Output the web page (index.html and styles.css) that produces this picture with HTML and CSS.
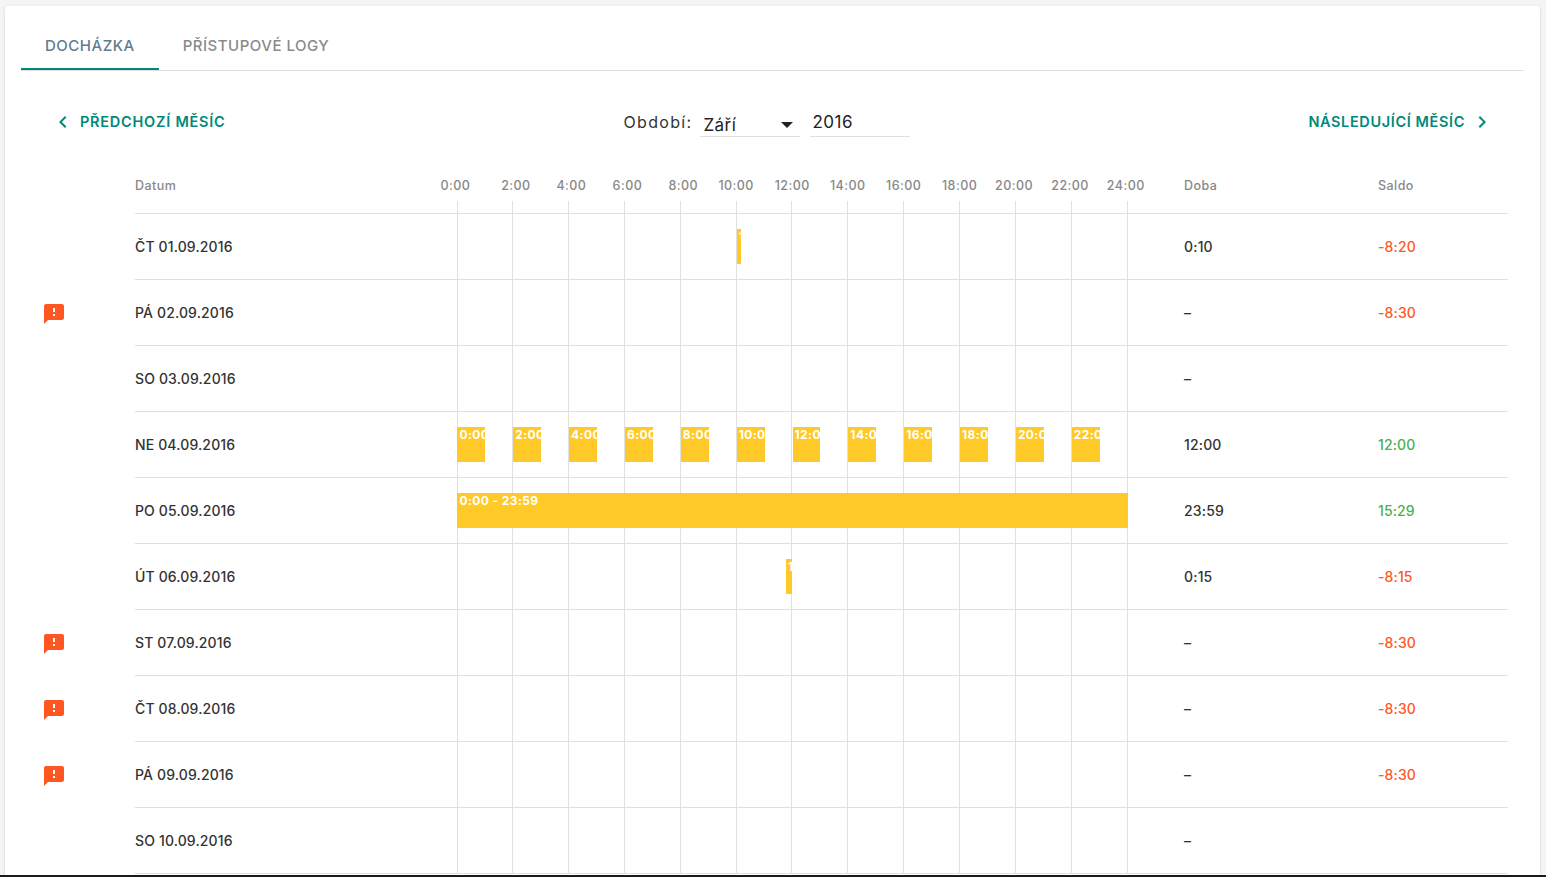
FILE: index.html
```html
<!DOCTYPE html>
<html lang="cs">
<head>
<meta charset="utf-8">
<title>Docházka</title>
<link rel="stylesheet" href="styles.css">
</head>
<body>
<main class="card">
  <nav class="tabs">
    <a class="tab tab-active">DOCHÁZKA</a>
    <a class="tab">PŘÍSTUPOVÉ LOGY</a>
  </nav>
  <div class="pager">
    <a class="pager-link">
      <svg class="icon" viewBox="0 0 24 24"><path d="M15.41 7.41L14 6l-6 6 6 6 1.41-1.41L10.83 12z"/></svg>
      <span>PŘEDCHOZÍ MĚSÍC</span>
    </a>
    <div class="period">
      <span class="period-label">Období:</span>
      <div class="field field-select"><span class="month">Září</span><i class="caret"></i></div>
      <div class="field"><span class="year">2016</span></div>
    </div>
    <a class="pager-link pager-next">
      <span>NÁSLEDUJÍCÍ MĚSÍC</span>
      <svg class="icon" viewBox="0 0 24 24"><path d="M10 6L8.59 7.41 13.17 12l-4.58 4.59L10 18l6-6z"/></svg>
    </a>
  </div>
  <section class="sheet">
    <div class="gridlines"><i></i><i></i><i></i><i></i><i></i><i></i><i></i><i></i><i></i><i></i><i></i><i></i><i></i></div>

    <div class="row row-head">
      <div class="flag"></div>
      <div class="cols">
        <div>Datum</div>
        <div class="axis"><span>0:00</span><span>2:00</span><span>4:00</span><span>6:00</span><span>8:00</span><span>10:00</span><span>12:00</span><span>14:00</span><span>16:00</span><span>18:00</span><span>20:00</span><span>22:00</span><span>24:00</span></div>
        <div class="doba">Doba</div>
        <div>Saldo</div>
      </div>
    </div>

    <div class="row">
      <div class="flag"></div>
      <div class="cols">
        <div>ČT 01.09.2016</div>
        <div class="track"><div class="bar" style="left:41.667%;width:0.694%">10:00 - 10:10</div></div>
        <div class="doba">0:10</div>
        <div class="neg">-8:20</div>
      </div>
    </div>

    <div class="row">
      <div class="flag"><svg class="alert" viewBox="0 0 24 24"><path d="M20 2H4c-1.1 0-1.99.9-1.99 2L2 22l4-4h14c1.1 0 2-.9 2-2V4c0-1.1-.9-2-2-2zm-7 12h-2v-2h2v2zm0-4h-2V6h2v4z"/></svg></div>
      <div class="cols">
        <div>PÁ 02.09.2016</div>
        <div class="track"></div>
        <div class="doba">–</div>
        <div class="neg">-8:30</div>
      </div>
    </div>

    <div class="row">
      <div class="flag"></div>
      <div class="cols">
        <div>SO 03.09.2016</div>
        <div class="track"></div>
        <div class="doba">–</div>
        <div></div>
      </div>
    </div>

    <div class="row">
      <div class="flag"></div>
      <div class="cols">
        <div>NE 04.09.2016</div>
        <div class="track">
          <div class="bar" style="left:0%;width:4.167%">0:00 - 1:00</div>
          <div class="bar" style="left:8.333%;width:4.167%">2:00 - 3:00</div>
          <div class="bar" style="left:16.667%;width:4.167%">4:00 - 5:00</div>
          <div class="bar" style="left:25%;width:4.167%">6:00 - 7:00</div>
          <div class="bar" style="left:33.333%;width:4.167%">8:00 - 9:00</div>
          <div class="bar" style="left:41.667%;width:4.167%">10:00 - 11:00</div>
          <div class="bar" style="left:50%;width:4.167%">12:00 - 13:00</div>
          <div class="bar" style="left:58.333%;width:4.167%">14:00 - 15:00</div>
          <div class="bar" style="left:66.667%;width:4.167%">16:00 - 17:00</div>
          <div class="bar" style="left:75%;width:4.167%">18:00 - 19:00</div>
          <div class="bar" style="left:83.333%;width:4.167%">20:00 - 21:00</div>
          <div class="bar" style="left:91.667%;width:4.167%">22:00 - 23:00</div>
        </div>
        <div class="doba">12:00</div>
        <div class="pos">12:00</div>
      </div>
    </div>

    <div class="row">
      <div class="flag"></div>
      <div class="cols">
        <div>PO 05.09.2016</div>
        <div class="track"><div class="bar" style="left:0%;width:100%">0:00 - 23:59</div></div>
        <div class="doba">23:59</div>
        <div class="pos">15:29</div>
      </div>
    </div>

    <div class="row">
      <div class="flag"></div>
      <div class="cols">
        <div>ÚT 06.09.2016</div>
        <div class="track"><div class="bar" style="left:49.03%;width:0.97%">11:46 - 12:00</div></div>
        <div class="doba">0:15</div>
        <div class="neg">-8:15</div>
      </div>
    </div>

    <div class="row">
      <div class="flag"><svg class="alert" viewBox="0 0 24 24"><path d="M20 2H4c-1.1 0-1.99.9-1.99 2L2 22l4-4h14c1.1 0 2-.9 2-2V4c0-1.1-.9-2-2-2zm-7 12h-2v-2h2v2zm0-4h-2V6h2v4z"/></svg></div>
      <div class="cols">
        <div>ST 07.09.2016</div>
        <div class="track"></div>
        <div class="doba">–</div>
        <div class="neg">-8:30</div>
      </div>
    </div>

    <div class="row">
      <div class="flag"><svg class="alert" viewBox="0 0 24 24"><path d="M20 2H4c-1.1 0-1.99.9-1.99 2L2 22l4-4h14c1.1 0 2-.9 2-2V4c0-1.1-.9-2-2-2zm-7 12h-2v-2h2v2zm0-4h-2V6h2v4z"/></svg></div>
      <div class="cols">
        <div>ČT 08.09.2016</div>
        <div class="track"></div>
        <div class="doba">–</div>
        <div class="neg">-8:30</div>
      </div>
    </div>

    <div class="row">
      <div class="flag"><svg class="alert" viewBox="0 0 24 24"><path d="M20 2H4c-1.1 0-1.99.9-1.99 2L2 22l4-4h14c1.1 0 2-.9 2-2V4c0-1.1-.9-2-2-2zm-7 12h-2v-2h2v2zm0-4h-2V6h2v4z"/></svg></div>
      <div class="cols">
        <div>PÁ 09.09.2016</div>
        <div class="track"></div>
        <div class="doba">–</div>
        <div class="neg">-8:30</div>
      </div>
    </div>

    <div class="row">
      <div class="flag"></div>
      <div class="cols">
        <div>SO 10.09.2016</div>
        <div class="track"></div>
        <div class="doba">–</div>
        <div></div>
      </div>
    </div>
  </section>
</main>
<div class="edge"></div>
</body>
</html>
```
FILE: styles.css
```css
* { box-sizing: border-box; }
html, body { margin: 0; height: 100%; }
body {
  display: flex;
  flex-direction: column;
  height: 877px;
  overflow: hidden;
  background: #f5f5f5;
  font-family: "Inter", "Liberation Sans", sans-serif;
  color: #333;
}
.card {
  flex: 1;
  min-height: 0;
  margin: 6px 6px 0 5px;
  padding: 16px 0 0;
  overflow: hidden;
  background: #fff;
  border-radius: 3px 3px 0 0;
  box-shadow: 0 1px 3px rgba(0,0,0,.16);
}
.edge { flex: none; height: 2px; background: #1a1a1a; }

/* tabs */
.tabs {
  display: flex;
  height: 49px;
  margin: 0 16px;
  border-bottom: 1px solid #e0e0e0;
}
.tab {
  display: flex;
  align-items: center;
  padding: 0 24px 1px;
  font-size: 15px;
  font-weight: 500;
  letter-spacing: .5px;
  color: #8a8a8a;
}
.tab-active { color: #5f7d8e; border-bottom: 2px solid #00897b; padding-bottom: 0; }

/* month pager */
.pager {
  display: flex;
  justify-content: space-between;
  align-items: center;
  height: 36px;
  margin-top: 33px;
  padding: 0 46px;
}
.pager-link {
  display: flex;
  align-items: center;
  gap: 5px;
  font-size: 14.5px;
  font-weight: 600;
  letter-spacing: .76px;
  color: #00897b;
}
.pager-next { letter-spacing: .62px; }
.pager-link span { margin-top: -1px; }
.icon { width: 24px; height: 24px; fill: #00897b; flex: none; }
.period { display: flex; align-items: center; gap: 10px; }
.period-label { font-size: 16px; letter-spacing: 1.3px; margin-right: -2px; margin-top: -1px; }
.field {
  display: flex;
  align-items: center;
  justify-content: space-between;
  width: 100px;
  height: 30px;
  padding: 0 1px 0 2px;
  border-bottom: 1px solid #e0e0e0;
  font-size: 17px;
  letter-spacing: .5px;
  color: #222;
}
.field-select { padding-left: 3px; padding-right: 7px; }
.month { margin-top: 6px; }
.caret {
  width: 0;
  height: 0;
  border-left: 6px solid transparent;
  border-right: 6px solid transparent;
  border-top: 6px solid #222;
  margin-top: 6px;
}

/* sheet */
.sheet { position: relative; margin-top: 25px; padding-right: 32px; }
.gridlines {
  position: absolute;
  top: 36px;
  bottom: 0;
  left: 451.5px;
  display: flex;
}
.gridlines i { flex: none; width: 55.8333px; border-left: 1px solid #e0e0e0; }
.gridlines i:last-child { margin-left: .5px; }

.row { display: flex; position: relative; }
.flag { flex: none; width: 130px; padding: 2px 0 0 37px; display: flex; align-items: center; }
.alert { width: 24px; height: 24px; fill: #ff5722; }
.cols {
  flex: 1;
  display: grid;
  grid-template-columns: 322.42px 670.2px 250.38px 1fr;
  align-items: center;
  height: 66px;
  border-bottom: 1px solid #e0e0e0;
  font-size: 14px;
  font-weight: 500;
  letter-spacing: .14px;
  color: #333;
}
.cols > div:not(.track) { margin-bottom: 1px; }
.row-head .cols {
  height: 49px;
  padding-top: 13px;
  font-size: 12.5px;
  color: #888;
  letter-spacing: .45px;
  align-items: start;
}
.axis { display: flex; margin-left: -38.5px; }
.axis span { flex: none; width: 55.8333px; text-align: right; }
.axis span:first-child { padding-right: 4.5px; }
.doba { padding-left: 56.5px; }
.neg { color: #ff5722; }
.pos { color: #4caf50; }

/* bars on the 24h track */
.track { position: relative; height: 65px; }
.bar {
  position: absolute;
  top: 15px;
  height: 35px;
  overflow: hidden;
  white-space: nowrap;
  padding-left: 2px;
  background: #ffca28;
  color: #fff;
  font-size: 12px;
  font-weight: 700;
  letter-spacing: .4px;
  line-height: 15px;
}
```
